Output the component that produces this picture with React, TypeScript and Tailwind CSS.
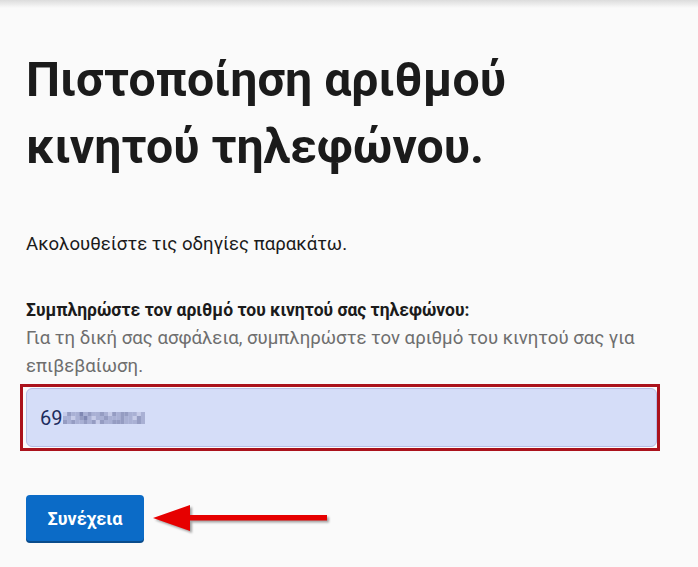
// redaction mosaic over the phone digits (3 rows x 20 columns)
const mosaic = [
  'acbbdbcbbcbacbccbbab',
  'bbabcdbabbcbbbcbbacb',
  'cbcbbcbcacbbcccbbbcb',
]
const shades: Record<string, string> = {
  a: '#c6cbe8',
  b: '#a9b0d4',
  c: '#959cc2',
  d: '#8088b3',
}

function Mosaic() {
  return (
    <svg width="82" height="12" viewBox="0 0 82 12" className="ml-[1px]">
      {mosaic.map((row, r) =>
        row.split('').map((k, c) => (
          <rect key={`${r}-${c}`} x={c * 4.1} y={r * 4} width="4.2" height="4" fill={shades[k]} />
        ))
      )}
    </svg>
  )
}

export default function App() {
  return (
    <div className="min-h-[567px] bg-[#fafafa] font-['Roboto','Noto_Sans',sans-serif] text-[#1b1b1b]">
      {/* shadow from the header above */}
      <div className="h-[8px] bg-gradient-to-b from-[#dcdcdc] to-[#fafafa]" />

      <main className="pl-[26px] pr-[40px] pt-[38px]">
        <h1 className="text-[48.2px] leading-[67px] font-bold">
          Πιστοποίηση αριθμού
          <br />
          κινητού τηλεφώνου.
        </h1>

        <p className="mt-[50px] text-[18.6px] leading-[28px]">
          Ακολουθείστε τις οδηγίες παρακάτω.
        </p>

        <label htmlFor="phone" className="mt-[38px] block text-[17.5px] leading-[28px] font-bold">
          Συμπληρώστε τον αριθμό του κινητού σας τηλεφώνου:
        </label>
        <p className="text-[18.6px] leading-[28px] text-[#6e6e6e]">
          Για τη δική σας ασφάλεια, συμπληρώστε τον αριθμό του κινητού σας για επιβεβαίωση.
        </p>

        <div className="mt-[4px] -ml-[6px] w-[640px] border-[3px] border-[#ab121c] pl-[3px] py-px">
          <div
            id="phone"
            className="flex h-[59px] items-center rounded-[6px] border border-[#b7bce6] bg-[#d5ddf8] pl-[13px] text-[20px] text-[#1d2c5e]"
          >
            <span>69</span>
            <Mosaic />
          </div>
        </div>

        <div className="mt-[44px] flex items-center gap-[9px]">
          <button className="h-[46px] rounded-[4px] bg-[#0b6bc7] px-[21.5px] text-[18px] font-bold text-white shadow-[0_2px_0_#0a4c8c]">
            Συνέχεια
          </button>
          <svg width="180" height="30" viewBox="0 0 180 30" className="drop-shadow-[2px_2px_1px_rgba(0,0,0,0.35)]">
            <path d="M0 15 L37 2 L37 12 L174 12 L174 17.5 L37 17.5 L37 28 Z" fill="#e60000" />
          </svg>
        </div>
      </main>
    </div>
  )
}
